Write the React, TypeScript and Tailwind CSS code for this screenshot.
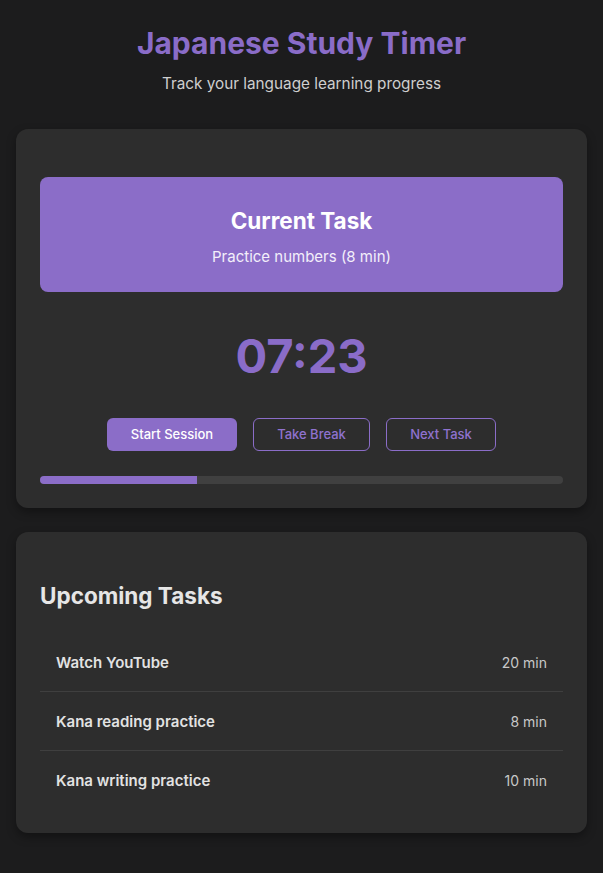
import { useState } from "react"

const tasks = [
  { name: "Watch YouTube", minutes: 20 },
  { name: "Kana reading practice", minutes: 8 },
  { name: "Kana writing practice", minutes: 10 },
]

export default function App() {
  const [progress] = useState(30)

  return (
    <div className="min-h-screen bg-[#1c1c1d] px-4 pt-[24px] pb-10 font-['Inter','Noto_Sans',sans-serif]">
      <header className="text-center">
        <h1 className="text-[30px] leading-[38px] font-bold text-[#8a6cc8]">Japanese Study Timer</h1>
        <p className="mt-[12px] text-[15.3px] leading-[20px] text-[#cfcfcf]">Track your language learning progress</p>
      </header>

      <section className="mt-[35px] rounded-xl bg-[#2d2d2d] p-6 shadow-[0_4px_10px_rgba(0,0,0,0.35)]">
        <div className="mt-6 rounded-lg bg-[#8b6dc8] pt-[29px] pb-[24px] text-center">
          <h2 className="text-[22.5px] leading-[30px] font-bold text-white">Current Task</h2>
          <p className="mt-[10px] text-[15px] leading-[22px] text-[#f3effa]">Practice numbers (8 min)</p>
        </div>

        <div className="mt-[32px] mb-[30px] text-center text-[47px] leading-[64px] font-bold text-[#8a6cc8]">07:23</div>

        <div className="flex justify-center gap-4">
          <button className="h-[33px] w-[130px] rounded-md bg-[#8b6dc8] pt-[1px] text-[13px] font-medium text-white">
            Start Session
          </button>
          <button className="h-[33px] w-[117px] rounded-md border border-[#8b6dc8] pt-[1px] text-[13px] font-medium text-[#8f72cf]">
            Take Break
          </button>
          <button className="h-[33px] w-[110px] rounded-md border border-[#8b6dc8] pt-[1px] text-[13px] font-medium text-[#8f72cf]">
            Next Task
          </button>
        </div>

        <div className="mt-[25px] h-2 overflow-hidden rounded-full bg-[#404040]">
          <div className="h-full bg-[#8b6dc8]" style={{ width: `${progress}%` }} />
        </div>
      </section>

      <section className="mt-6 rounded-xl bg-[#2d2d2d] p-6 shadow-[0_4px_10px_rgba(0,0,0,0.35)]">
        <h2 className="mt-[25px] mb-[22px] text-[22.5px] leading-[30px] font-bold text-[#e6e6e6]">Upcoming Tasks</h2>
        <ul>
          {tasks.map((task, i) => (
            <li
              key={task.name}
              className={`flex items-center justify-between px-4 pt-[21px] pb-[19px] ${i < tasks.length - 1 ? "border-b border-[#3f3f3f]" : ""}`}
            >
              <span className="text-[15px] leading-[18px] font-semibold text-[#e2e2e2]">{task.name}</span>
              <span className="text-[14px] leading-[18px] text-[#c8c8c8]">{task.minutes} min</span>
            </li>
          ))}
        </ul>
      </section>
    </div>
  )
}
